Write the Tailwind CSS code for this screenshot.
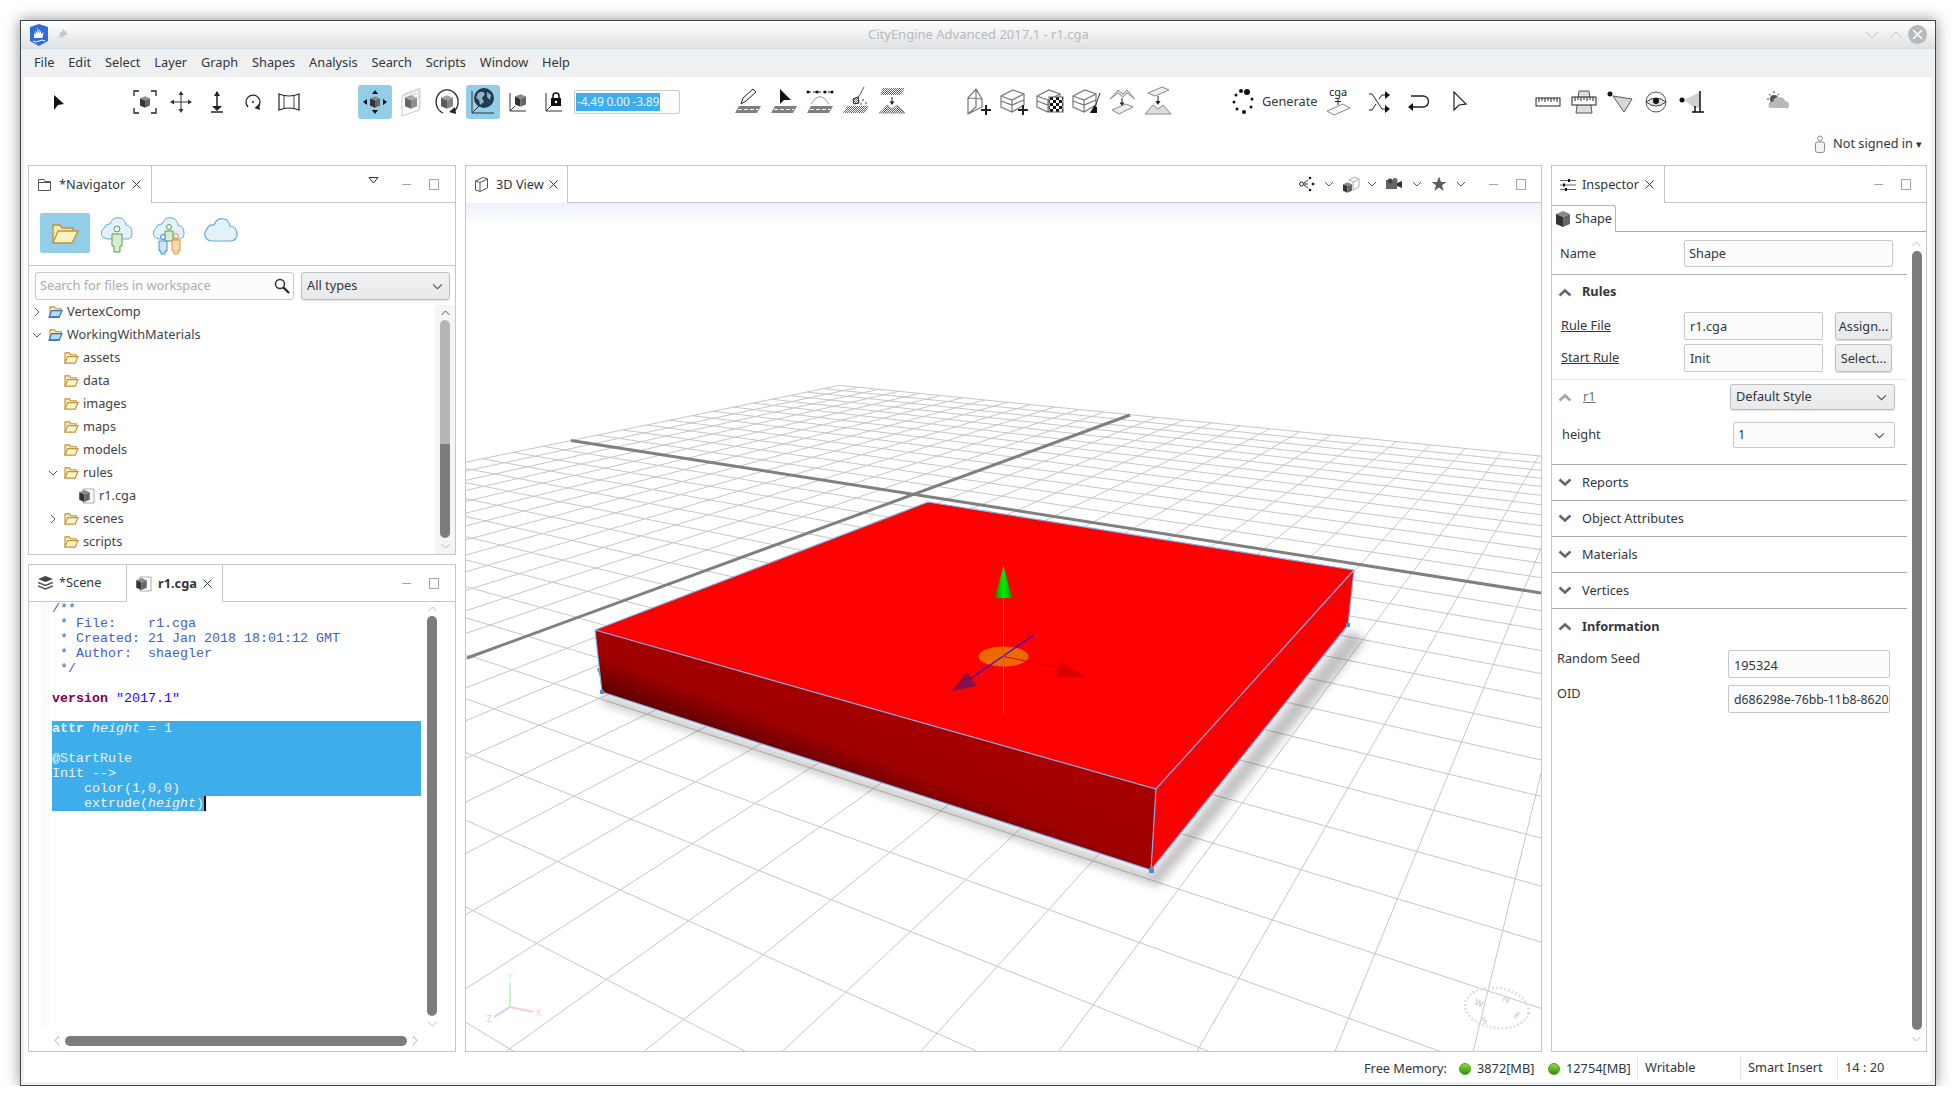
<!DOCTYPE html>
<html lang="en">
<head>
  <meta charset="UTF-8" />
  <title>CityEngine Advanced 2017.1 - r1.cga</title>
  <script src="https://cdn.jsdelivr.net/npm/@tailwindcss/browser@4"></script>
</head>
<body class="bg-white font-['Noto_Sans',sans-serif] text-[12.75px] text-[#31363b] overflow-hidden">

  <!-- shared icon parts -->
  <svg class="absolute w-0 h-0">
    <defs>
      <pattern id="hatch" width="2" height="2" patternUnits="userSpaceOnUse">
        <rect width="2" height="2" fill="#fff" />
        <rect width="1" height="1" fill="#666" />
        <rect x="1" y="1" width="1" height="1" fill="#666" />
      </pattern>
      <pattern id="checker" width="6" height="6" patternUnits="userSpaceOnUse">
        <rect width="6" height="6" fill="#fff" />
        <rect width="3" height="3" fill="#111" />
        <rect x="3" y="3" width="3" height="3" fill="#111" />
      </pattern>
      <linearGradient id="frontFace" gradientUnits="userSpaceOnUse" x1="900" y1="716" x2="872" y2="790">
        <stop offset="0" stop-color="#a60000" />
        <stop offset="0.62" stop-color="#9e0000" />
        <stop offset="1" stop-color="#640000" />
      </linearGradient>
      <linearGradient id="greenCone" x1="0" x2="1" y1="0" y2="0">
        <stop offset="0" stop-color="#009a00" />
        <stop offset="0.5" stop-color="#00ee00" />
        <stop offset="1" stop-color="#00a000" />
      </linearGradient>
      <filter id="soft" x="-10%" y="-10%" width="120%" height="120%"><feGaussianBlur stdDeviation="5" /></filter>
    </defs>
    <symbol id="cube" viewBox="0 0 14 16">
      <path d="M7 0 14 3 7 6 0 3z" fill="#8a8a8a" />
      <path d="M0 3 7 6V16L0 13z" fill="#333" />
      <path d="M14 3 7 6V16L14 13z" fill="#666" />
    </symbol>
    <symbol id="folder" viewBox="0 0 16 14">
      <path d="M1 13V2h5l1 2h6v2" fill="#fbeebb" stroke="#c98f35" stroke-width="1.200" />
      <path d="M1 13 4 6h11l-3 7z" fill="#fff5cf" stroke="#c98f35" stroke-width="1.200" />
    </symbol>
    <symbol id="project" viewBox="0 0 16 14">
      <path d="M2 13V2h5l1 2h6v2" fill="#fbeebb" stroke="#c98f35" stroke-width="1.200" />
      <path d="M1 13 4 6h11l-3 7z" fill="#bcd8f6" stroke="#2a74c9" stroke-width="1.200" />
      <path d="M1 13h11" stroke="#2a74c9" stroke-width="1.5" />
    </symbol>
    <symbol id="road" viewBox="0 0 36 34">
      <path d="M5 28 9 21H31L27 28z" fill="#808080" />
      <path d="M8 24.5H28" stroke="#fff" stroke-dasharray="4 2" />
    </symbol>
    <symbol id="hroad" viewBox="0 0 36 34">
      <path d="M5 28 9 21H31L27 28z" fill="url(#hatch)" />
    </symbol>
    <symbol id="wirebox" viewBox="0 0 36 34">
      <path d="M5 11 17 5 28 9V20L16 27 5 22z M5 11 16 15 28 9 M16 15V27 M5 16 16 20 28 15" fill="#fff" stroke="#777" stroke-width="1.2" />
    </symbol>
    <symbol id="plus" viewBox="0 0 10 10">
      <path d="M5 0V10M0 5H10" stroke="#222" stroke-width="2" />
    </symbol>
    <symbol id="chev" viewBox="0 0 10 6">
      <path d="M1 1 5 5 9 1" fill="none" stroke="#555" />
    </symbol>
    <symbol id="hdup" viewBox="0 0 14 9">
      <path d="M1.5 7.5 7 2.5 12.5 7.5" fill="none" stroke="#666" stroke-width="2.6" />
    </symbol>
    <symbol id="hddown" viewBox="0 0 14 9">
      <path d="M1.5 1.5 7 6.5 12.5 1.5" fill="none" stroke="#666" stroke-width="2.6" />
    </symbol>
  </svg>

  <div class="ml-[20px] mt-[20px] w-[1916px] h-[1066px] border border-[#3f4750] shadow-[0_0_14px_rgba(0,0,0,0.45)] bg-[#eff0f1] flex flex-col">

    <!-- title bar -->
    <div class="h-[28px] shrink-0 relative flex items-center bg-linear-to-b from-white to-[#dfe1e3] border-b border-[#d3e0ea]">
      <svg class="ml-[8px] w-[20px] h-[22px]" viewBox="0 0 20 22">
        <path d="M10 0 19 3V17L10 22 1 17V3z" fill="#2f6bdc" />
        <path d="M5 14V9l1.5 2V6l2 4V3l2 7V5l2 5 2-2-1 6z" fill="#fff" />
        <path d="M4 17q3 2 6 0t6 0" fill="none" stroke="#fff" />
      </svg>
      <svg class="ml-[6px] w-[14px] h-[14px]" viewBox="0 0 14 14">
        <path d="M8 1 13 6 10 7 7 10 6 8 2 12 5 7 4 5 7 4z" fill="#c4c7ca" />
      </svg>
      <div class="absolute left-[847px] text-[#b7babd] text-[13px]">CityEngine Advanced 2017.1 - r1.cga</div>
      <div class="ml-auto flex items-center pr-[8px]">
        <svg class="w-[14px] h-[8px] mr-[10px]" viewBox="0 0 14 8"><path d="M1 1 7 7 13 1" fill="none" stroke="#c2c5c8" /></svg>
        <svg class="w-[14px] h-[8px] mr-[5px]" viewBox="0 0 14 8"><path d="M1 7 7 1 13 7" fill="none" stroke="#c2c5c8" /></svg>
        <svg class="w-[19px] h-[19px]" viewBox="0 0 19 19"><circle cx="9.500" cy="9.500" r="9.500" fill="#b6babd" /><path d="M5 5 14 14M14 5 5 14" stroke="#fff" stroke-width="1.500" /></svg>
      </div>
    </div>

    <!-- menu bar -->
    <div class="h-[28px] shrink-0 flex items-center gap-[13.9px] pl-[13px]">
      <span>File</span><span>Edit</span><span>Select</span><span>Layer</span><span>Graph</span><span>Shapes</span><span>Analysis</span><span>Search</span><span>Scripts</span><span>Window</span><span>Help</span>
    </div>

    <div class="flex-1 mx-[3px] mb-[3px] bg-white flex flex-col min-h-0">

      <!-- main toolbar -->
      <div class="h-[50px] shrink-0 flex items-center">
        <svg class="ml-[17px] w-[36px] h-[34px]" viewBox="0 0 36 34"><path d="M13 10V25L17 20 23 19z" fill="#111" /></svg>

        <div class="ml-[50px] flex">
          <svg class="w-[36px] h-[34px]" viewBox="0 0 36 34"><path d="M7 11V6h5M24 6h5v5M7 23v5h5M24 28h5v-5" fill="none" stroke="#222" stroke-width="1.300" /><use href="#cube" x="13" y="11" width="10" height="12" /></svg>
          <svg class="w-[36px] h-[34px]" viewBox="0 0 36 34"><path d="M18 8V26M9 17H27" stroke="#333" /><path d="M18 6 15.500 10H20.500zM18 28 15.500 24H20.500zM7 17 11 14.500V19.500zM29 17 25 14.500V19.500z" fill="#333" /></svg>
          <svg class="w-[36px] h-[34px]" viewBox="0 0 36 34"><path d="M18 7V24" stroke="#222" stroke-width="1.500" /><path d="M18 6 15 11H21zM18 26 13 21H23z" fill="#222" /><path d="M12 27H24" stroke="#222" stroke-width="1.500" /></svg>
          <svg class="w-[36px] h-[34px]" viewBox="0 0 36 34"><path d="M23 22A7 7 0 1 0 13 22" fill="none" stroke="#222" stroke-width="1.300" /><path d="M25 25 19.500 23 24 19z" fill="#222" /><circle cx="18" cy="17" r="1" fill="#222" /></svg>
          <svg class="w-[36px] h-[34px]" viewBox="0 0 36 34"><path d="M8 9Q18 13 28 9V25Q18 21 8 25z" fill="#fff" stroke="#222" stroke-width="1.200" /><path d="M13 11V23M23 11V23" stroke="#444" /></svg>
        </div>

        <div class="ml-[50px] flex items-center">
          <div class="w-[36px] h-[34px] flex justify-center">
            <svg class="w-[34px] h-[34px] rounded-[3px] bg-[#93cee9]" viewBox="0 0 34 34"><use href="#cube" x="12" y="11" width="10" height="12" /><path d="M17 5 14 9H20zM17 29 14 25H20zM5 17 9 14V20zM29 17 25 14V20z" fill="#111" /></svg>
          </div>
          <svg class="w-[36px] h-[34px]" viewBox="0 0 36 34"><path d="M9 11 26 5V25L9 31z" fill="#fff" stroke="#ccc" /><path d="M11 9 27 3V23" fill="none" stroke="#ccc" /><path d="M11 13 24 8.500" stroke="#bbb" /><use href="#cube" x="12" y="10" width="12" height="14" opacity=".75" /></svg>
          <svg class="w-[36px] h-[34px]" viewBox="0 0 36 34"><path d="M24 27A11 12 0 1 0 14 28" fill="none" stroke="#222" stroke-width="1.300" /><path d="M27 29 20 27 26 22z" fill="#222" /><use href="#cube" x="12" y="10" width="12" height="14" opacity=".8" /></svg>
          <div class="w-[36px] h-[34px] flex justify-center">
            <svg class="w-[34px] h-[34px] rounded-[3px] bg-[#93cee9]" viewBox="0 0 34 34"><path d="M6 6V28H28" fill="none" stroke="#333" /><path d="M6 28 13 21" stroke="#333" /><circle cx="18" cy="13" r="10" fill="#1f3b4d" /><path d="M12 8q5-3 7 1l-3 4 2 4-4 3-1-5-3-2zM21 7l4 3-1 5-3-3z" fill="#8fb4c8" /></svg>
          </div>
          <svg class="w-[36px] h-[34px]" viewBox="0 0 36 34"><path d="M9 8V26H25" fill="none" stroke="#333" /><path d="M9 26 14 21" stroke="#333" /><use href="#cube" x="14" y="9" width="11" height="13" /></svg>
          <svg class="w-[36px] h-[34px]" viewBox="0 0 36 34"><path d="M9 8V26H25" fill="none" stroke="#333" /><path d="M9 26 14 21" stroke="#333" /><rect x="14" y="13" width="10" height="8" fill="#111" /><path d="M16 13V11a3 3 0 0 1 6 0v2" fill="none" stroke="#111" stroke-width="1.500" /><circle cx="19" cy="17" r="1.200" fill="#fff" /></svg>
          <div class="ml-[1px] w-[106px] h-[24px] border border-[#c9cbcd] rounded-[2px] bg-[#fcfcfc] flex items-center pl-[1px] text-[12px] overflow-hidden">
            <span class="bg-[#3daee9] text-[#eff0f1] px-[1px] leading-[18px] tracking-[-0.2px] whitespace-nowrap">-4.49 0.00 -3.89</span>
          </div>
        </div>

        <div class="ml-[50px] flex">
          <svg class="w-[36px] h-[34px]" viewBox="0 0 36 34"><path d="M11 19 13 13 23 4 26 7 16 16z" fill="#fff" stroke="#222" /><use href="#road" width="36" height="34" /></svg>
          <svg class="w-[36px] h-[34px]" viewBox="0 0 36 34"><path d="M14 4V19L18 15H25z" fill="#111" /><use href="#road" width="36" height="34" /></svg>
          <svg class="w-[36px] h-[34px]" viewBox="0 0 36 34"><path d="M6 7H30" stroke="#222" stroke-dasharray="3 2" /><circle cx="6" cy="7" r="1.500" fill="#111" /><circle cx="15" cy="7" r="1.500" fill="#111" /><circle cx="23" cy="7" r="1.500" fill="#111" /><circle cx="30" cy="7" r="1.500" fill="#111" /><path d="M9 19Q18 4 27 19" fill="none" stroke="#999" /><use href="#road" width="36" height="34" /></svg>
          <svg class="w-[36px] h-[34px]" viewBox="0 0 36 34"><path d="M26 2 20 13" stroke="#555" /><path d="M20 12 15 14 16 19 21 18z" fill="url(#hatch)" stroke="#222" /><circle cx="25" cy="15" r=".8" fill="#222" /><circle cx="28" cy="18" r=".8" fill="#222" /><circle cx="23" cy="19" r=".8" fill="#222" /><use href="#hroad" width="36" height="34" /></svg>
          <svg class="w-[36px] h-[34px]" viewBox="0 0 36 34"><path d="M6 10 9 3H31L27 10z" fill="url(#hatch)" /><path d="M18 12V18" stroke="#222" /><path d="M18 20 15.500 16.500H20.500z" fill="#222" /><path d="M5 28 13 20 18 24 23 20 31 28z" fill="url(#hatch)" stroke="#999" /></svg>
        </div>

        <div class="ml-[50px] flex">
          <svg class="w-[36px] h-[34px]" viewBox="0 0 36 34"><path d="M8 13 16 4 22 14V22L8 29zM8 13 22 14M16 4V22L8 29" fill="#fff" stroke="#777" stroke-width="1.200" /><use href="#plus" x="21" y="20" width="10" height="10" /></svg>
          <svg class="w-[36px] h-[34px]" viewBox="0 0 36 34"><use href="#wirebox" width="36" height="34" /><use href="#plus" x="22" y="20" width="10" height="10" /></svg>
          <svg class="w-[36px] h-[34px]" viewBox="0 0 36 34"><use href="#wirebox" width="36" height="34" /><rect x="17" y="12" width="14" height="15" fill="url(#checker)" stroke="#666" /></svg>
          <svg class="w-[36px] h-[34px]" viewBox="0 0 36 34"><use href="#wirebox" width="36" height="34" /><path d="M32 8 27 22" stroke="#333" /><path d="M26 21 22 28H29L29 22z" fill="#111" /></svg>
          <svg class="w-[36px] h-[34px]" viewBox="0 0 36 34"><path d="M6 14 14 5 19 9 23 5 31 14 23 8 19 12 14 8z" fill="#ddd" stroke="#888" /><path d="M18 13V19" stroke="#222" /><path d="M18 21 15.500 17.500H20.500z" fill="#222" /><path d="M8 25 22 19 29 22 15 29z" fill="#eee" stroke="#888" /></svg>
          <svg class="w-[36px] h-[34px]" viewBox="0 0 36 34"><path d="M8 8 22 2 29 5 15 11z" fill="#eee" stroke="#888" /><path d="M18 11V17" stroke="#222" /><path d="M18 20 15.500 16H20.500z" fill="#222" /><path d="M5 29 13 20 18 24 23 20 31 29z" fill="#ddd" stroke="#888" /></svg>
        </div>

        <svg class="ml-[49px] w-[36px] h-[34px]" viewBox="0 0 36 34"><circle cx="22" cy="7" r="3" fill="#111" /><circle cx="16" cy="6" r="2" fill="#111" /><circle cx="27" cy="14" r="1.500" fill="#111" /><circle cx="26" cy="22" r="1.500" fill="#111" /><circle cx="19" cy="27" r="2" fill="#111" /><circle cx="12" cy="24" r="1.500" fill="#111" /><circle cx="9" cy="17" r="1.500" fill="#111" /><circle cx="11" cy="10" r="1.500" fill="#111" /></svg>
        <span class="w-[59px] whitespace-nowrap pl-[1px]">Generate</span>
        <svg class="w-[36px] h-[34px]" viewBox="0 0 36 34"><text x="18" y="11" text-anchor="middle" font-family="Noto Sans" font-size="11" fill="#222">cga</text><path d="M18 13V20M15 16.500H21" stroke="#222" /><path d="M7 26 23 19 30 23 14 30z" fill="#fff" stroke="#888" /></svg>
        <svg class="ml-[4px] w-[36px] h-[34px]" viewBox="0 0 36 34"><path d="M9 9H12L22 24H26M9 25H12L16 19M19 14 22 10H26" fill="none" stroke="#222" /><path d="M30 10 25 6V14zM30 24 25 20V28z" fill="#111" /></svg>
        <svg class="ml-[4px] w-[36px] h-[34px]" viewBox="0 0 36 34"><path d="M11 11H23A5 5 0 0 1 23 22H12" fill="none" stroke="#222" stroke-width="1.400" /><path d="M8 22 13 18V26z" fill="#111" /></svg>
        <svg class="ml-[6px] w-[36px] h-[34px]" viewBox="0 0 36 34"><path d="M12 7V25L17 20 24 19z" fill="#fff" stroke="#222" stroke-width="1.200" /></svg>

        <div class="ml-[52px] flex">
          <svg class="w-[36px] h-[34px]" viewBox="0 0 36 34"><rect x="6" y="13" width="24" height="8" fill="#fff" stroke="#222" /><path d="M9 13V17M12 13V16M15 13V17M18 13V16M21 13V17M24 13V16M27 13V17" stroke="#222" /></svg>
          <svg class="w-[36px] h-[34px]" viewBox="0 0 36 34"><path d="M13 6H23L26 28H10z" fill="#ddd" stroke="#555" /><rect x="6" y="12" width="24" height="8" fill="#fff" stroke="#222" /><path d="M9 12V16M12 12V15M15 12V16M18 12V15M21 12V16M24 12V15M27 12V16" stroke="#222" /></svg>
          <svg class="w-[36px] h-[34px]" viewBox="0 0 36 34"><path d="M11 11 30 14 22 27z" fill="#d7d7d7" stroke="#555" /><circle cx="8" cy="9" r="2.500" fill="#111" /></svg>
          <svg class="w-[36px] h-[34px]" viewBox="0 0 36 34"><circle cx="18" cy="17" r="10" fill="#fff" stroke="#555" /><path d="M8 17Q18 9 28 17Q18 25 8 17z" fill="#e0e0e0" stroke="#444" /><circle cx="18" cy="16" r="3" fill="#111" /></svg>
          <svg class="w-[36px] h-[34px]" viewBox="0 0 36 34"><path d="M10 15 26 7V23H21z" fill="#d0d0d0" /><path d="M26 6V27M21 21V27M18 27H30" stroke="#111" stroke-width="1.500" /><circle cx="8" cy="15" r="2.500" fill="#111" /></svg>
        </div>

        <svg class="ml-[50px] w-[36px] h-[34px]" viewBox="0 0 36 34"><circle cx="14" cy="14" r="4" fill="#555" /><path d="M14 6V8M7 14H9M9 9 10.500 10.500M19 9 17.500 10.500M9 19 10.500 17.500" stroke="#333" /><path d="M11 23Q8 23 8.500 20T13 17Q14 12 19 12T25 16Q30 17 29 21T26 23z" fill="#b9b9b9" /></svg>
      </div>

      <!-- sign in row -->
      <div class="h-[38px] shrink-0 flex items-center justify-end pr-[10px] pb-[4px]">
        <svg class="w-[10px] h-[18px] mr-[8px]" viewBox="0 0 10 18"><circle cx="5" cy="3.500" r="2.500" fill="#fff" stroke="#8a8d90" /><rect x=".5" y="7" width="9" height="10.500" rx="2" fill="#f3f3f3" stroke="#8a8d90" /></svg>
        <span>Not signed in</span><span class="ml-[3px] text-[11px]">▾</span>
      </div>

      <!-- panels -->
      <div class="h-[887px] shrink-0 flex pl-[4px] gap-[9px]">

        <!-- left column -->
        <div class="w-[428px] flex flex-col gap-[9px]">

          <!-- navigator -->
          <div class="h-[390px] shrink-0 border border-[#c4c6c8] flex flex-col">
            <div class="h-[37px] shrink-0 flex">
              <div class="w-[123px] border-r border-[#c4c6c8] flex items-center pl-[9px]">
                <svg class="w-[13px] h-[12px] mr-[8px]" viewBox="0 0 13 12"><path d="M.5 11.500V.5H6L7 2.500H12.500V11.500zM.5 3.500H12.500" fill="none" stroke="#555" /></svg>
                <span>*Navigator</span>
                <svg class="ml-[7px] w-[9px] h-[9px]" viewBox="0 0 9 9"><path d="M.5.5 8.500 8.500M8.500.5 .5 8.500" stroke="#31363b" /></svg>
              </div>
              <div class="flex-1 border-b border-[#c4c6c8] flex items-center justify-end pr-[16px]">
                <svg class="w-[11px] h-[8px] mb-[8px] mr-[23px]" viewBox="0 0 11 8"><path d="M1 1.500H10L5.500 7z" fill="#fff" stroke="#333" /></svg>
                <div class="w-[9px] h-px bg-[#a4a8ac] mr-[18px]"></div>
                <div class="w-[10px] h-[11px] border border-[#a4a8ac]"></div>
              </div>
            </div>
            <!-- workspace icons -->
            <div class="h-[63px] shrink-0 border-b border-[#c4c6c8] flex items-start pl-[11px] pt-[10px]">
              <div class="w-[50px] h-[40px] rounded-[2px] bg-[#93cee9] flex items-center justify-center">
                <svg class="w-[27px] h-[21px]" viewBox="0 0 27 21"><path d="M1 19V2H8L10 5H21V9" fill="#f7e9a6" stroke="#c0923a" stroke-width="1.300" /><path d="M1 20 6 8H26L20 20z" fill="#fdf3c0" stroke="#c0923a" stroke-width="1.300" /></svg>
              </div>
              <svg class="ml-[9px] mt-[2px] w-[36px] h-[40px]" viewBox="0 0 36 40"><path d="M8 24A6 6 0 0 1 5 13Q7 8 11 9 14 1 21 3 26 4 27 10 33 11 33 18T27 24z" fill="#e3f1fb" stroke="#63add9" /><circle cx="18" cy="14" r="3" fill="#f3f8ee" stroke="#5e9a54" /><path d="M13 19H23V31H21V37H15V31H13z" fill="#d8ecd0" stroke="#5e9a54" /></svg>
              <svg class="ml-[16px] mt-[2px] w-[36px] h-[40px]" viewBox="0 0 36 40"><path d="M8 24A6 6 0 0 1 5 13Q7 8 11 9 14 1 21 3 26 4 27 10 33 11 33 18T27 24z" fill="#e3f1fb" stroke="#63add9" /><circle cx="18" cy="12" r="2.500" fill="#f3f8ee" stroke="#5e9a54" /><path d="M14 16H22V26H14z" fill="#d8ecd0" stroke="#5e9a54" /><circle cx="12" cy="22" r="2.500" fill="#e8f3fc" stroke="#3c8fd0" /><path d="M8 26H16V36H14V39H10V36H8z" fill="#cfe6f8" stroke="#3c8fd0" /><circle cx="25" cy="21" r="2.500" fill="#fdeedd" stroke="#ea8f3c" /><path d="M21 25H29V36H27V39H23V36H21z" fill="#fbd9b5" stroke="#ea8f3c" /></svg>
              <svg class="ml-[16px] mt-[3px] w-[36px] h-[28px]" viewBox="0 0 36 28"><path d="M8 25A7 7 0 0 1 4 13Q6 8 11 9 14 1 21 3 26 4 27 10 34 11 34 18T27 25z" fill="#e3f1fb" stroke="#63add9" stroke-width="1.200" /></svg>
            </div>
            <!-- search -->
            <div class="h-[6px] shrink-0"></div>
            <div class="h-[28px] shrink-0 flex pl-[6px] gap-[7px]">
              <div class="w-[259px] border border-[#c6c8ca] rounded-[3px] bg-[#fcfcfc] flex items-center pl-[4px] pr-[3px] text-[#a9acaf]">
                <span>Search for files in workspace</span>
                <svg class="ml-auto w-[16px] h-[16px]" viewBox="0 0 16 16"><circle cx="6" cy="6" r="4.500" fill="#fff" stroke="#333" stroke-width="1.500" /><path d="M9.500 9.500 15 15" stroke="#222" stroke-width="2.200" /></svg>
              </div>
              <div class="w-[149px] border border-[#bcbec0] rounded-[3px] bg-linear-to-b from-[#f0f1f2] to-[#e8e9ea] flex items-center pl-[5px] pr-[6px] shadow-[0_1px_1px_rgba(0,0,0,0.12)]">
                <span>All types</span>
                <svg class="ml-auto w-[11px] h-[7px]"><use href="#chev" width="11" height="7" /></svg>
              </div>
            </div>
            <!-- tree -->
            <div class="flex-1 flex min-h-0">
              <div class="flex-1 leading-[23px] text-[#3d4348]">
                <div class="h-[23px] flex items-center"><svg class="ml-[5px] w-[6px] h-[10px] mr-[8px]" viewBox="0 0 6 10"><path d="M1 1 5 5 1 9" fill="none" stroke="#555" /></svg><svg class="w-[15px] h-[13px] mr-[4px]"><use href="#project" width="15" height="13" /></svg>VertexComp</div>
                <div class="h-[23px] flex items-center"><svg class="ml-[3px] w-[10px] h-[6px] mr-[6px]"><use href="#chev" width="10" height="6" /></svg><svg class="w-[15px] h-[13px] mr-[4px]"><use href="#project" width="15" height="13" /></svg>WorkingWithMaterials</div>
                <div class="h-[23px] flex items-center pl-[35px]"><svg class="w-[15px] h-[13px] mr-[4px]"><use href="#folder" width="15" height="13" /></svg>assets</div>
                <div class="h-[23px] flex items-center pl-[35px]"><svg class="w-[15px] h-[13px] mr-[4px]"><use href="#folder" width="15" height="13" /></svg>data</div>
                <div class="h-[23px] flex items-center pl-[35px]"><svg class="w-[15px] h-[13px] mr-[4px]"><use href="#folder" width="15" height="13" /></svg>images</div>
                <div class="h-[23px] flex items-center pl-[35px]"><svg class="w-[15px] h-[13px] mr-[4px]"><use href="#folder" width="15" height="13" /></svg>maps</div>
                <div class="h-[23px] flex items-center pl-[35px]"><svg class="w-[15px] h-[13px] mr-[4px]"><use href="#folder" width="15" height="13" /></svg>models</div>
                <div class="h-[23px] flex items-center"><svg class="ml-[19px] w-[10px] h-[6px] mr-[6px]"><use href="#chev" width="10" height="6" /></svg><svg class="w-[15px] h-[13px] mr-[4px]"><use href="#folder" width="15" height="13" /></svg>rules</div>
                <div class="h-[23px] flex items-center pl-[50px]"><svg class="w-[16px] h-[16px] mr-[4px]" viewBox="0 0 16 16"><path d="M4 1H15V15H4z" fill="#fff" stroke="#aaa" /><use href="#cube" x="0" y="2" width="11" height="12" /></svg>r1.cga</div>
                <div class="h-[23px] flex items-center"><svg class="ml-[21px] w-[6px] h-[10px] mr-[8px]" viewBox="0 0 6 10"><path d="M1 1 5 5 1 9" fill="none" stroke="#555" /></svg><svg class="w-[15px] h-[13px] mr-[4px]"><use href="#folder" width="15" height="13" /></svg>scenes</div>
                <div class="h-[23px] flex items-center pl-[35px]"><svg class="w-[15px] h-[13px] mr-[4px]"><use href="#folder" width="15" height="13" /></svg>scripts</div>
              </div>
              <div class="w-[20px] mt-[5px] bg-[#f5f5f5] flex flex-col items-center">
                <svg class="mt-[5px] mb-[4px] w-[11px] h-[6px] rotate-180"><use href="#chev" width="11" height="6" /></svg>
                <div class="w-[10px] h-[124px] rounded-t-full bg-[#b4b6b8]"></div>
                <div class="w-[10px] h-[94px] rounded-b-full bg-[#7a7d7f]"></div>
                <svg class="mt-[5px] w-[11px] h-[6px] opacity-40"><use href="#chev" width="11" height="6" /></svg>
              </div>
            </div>
          </div>

          <!-- scene / editor -->
          <div class="flex-1 min-h-0 border border-[#c4c6c8] flex flex-col">
            <div class="h-[37px] shrink-0 flex">
              <div class="w-[98px] border-r border-b border-[#c4c6c8] flex items-center pl-[9px]">
                <svg class="w-[15px] h-[14px] mr-[6px]" viewBox="0 0 15 14"><path d="M7.500 0 15 3 7.500 6 0 3z" fill="#444" /><path d="M0 6.500 7.500 9.500 15 6.500M0 10 7.500 13 15 10" fill="none" stroke="#555" stroke-width="1.500" /></svg>
                <span>*Scene</span>
              </div>
              <div class="w-[96px] border-r border-[#c4c6c8] flex items-center pl-[9px]">
                <svg class="w-[16px] h-[16px] mr-[6px]" viewBox="0 0 16 16"><path d="M4 1H15V15H4z" fill="#fff" stroke="#aaa" /><use href="#cube" x="0" y="2" width="11" height="12" /></svg>
                <span class="font-bold">r1.cga</span>
                <svg class="ml-[6px] w-[9px] h-[9px]" viewBox="0 0 9 9"><path d="M.5.5 8.500 8.500M8.500.5 .5 8.500" stroke="#31363b" /></svg>
              </div>
              <div class="flex-1 border-b border-[#c4c6c8] flex items-center justify-end pr-[16px]">
                <div class="w-[9px] h-px bg-[#a4a8ac] mr-[18px]"></div>
                <div class="w-[10px] h-[11px] border border-[#a4a8ac]"></div>
              </div>
            </div>
            <div class="flex-1 min-h-0 flex">
              <div class="w-[12px] shrink-0"></div>
              <div class="w-[8px] shrink-0 bg-[#fafafa]"></div>
              <div class="flex-1 overflow-hidden pl-[3px]">
                <div class="-mt-[1px] font-['Liberation_Mono',monospace] text-[13.33px] leading-[15px] text-[#4560c0]">
                  <div class="h-[15px] whitespace-pre">/**</div>
                  <div class="h-[15px] whitespace-pre"> * File:    r1.cga</div>
                  <div class="h-[15px] whitespace-pre"> * Created: 21 Jan 2018 18:01:12 GMT</div>
                  <div class="h-[15px] whitespace-pre"> * Author:  shaegler</div>
                  <div class="h-[15px] whitespace-pre"> */</div>
                  <div class="h-[15px]"></div>
                  <div class="h-[15px] whitespace-pre"><span class="font-bold text-[#7f0055]">version</span> <span class="text-[#2a00ff]">"2017.1"</span></div>
                  <div class="h-[15px]"></div>
                  <div class="w-[370px] bg-[#3daee9] text-[#eff0f1]">
                    <div class="h-[15px] whitespace-pre"><span class="font-bold">attr</span> <span class="italic">height</span> = 1</div>
                    <div class="h-[15px]"></div>
                    <div class="h-[15px] whitespace-pre">@StartRule</div>
                    <div class="h-[15px] whitespace-pre">Init --&gt;</div>
                    <div class="h-[15px] whitespace-pre">    color(1,0,0)</div>
                  </div>
                  <div class="h-[15px] flex text-[#eff0f1]">
                    <span class="bg-[#3daee9] whitespace-pre">    extrude(<span class="italic">height</span>)</span><span class="w-[2px] bg-black"></span>
                  </div>
                </div>
              </div>
              <div class="w-[22px] shrink-0 mr-[12px] flex flex-col items-center">
                <svg class="mt-[4px] w-[11px] h-[6px] rotate-180 opacity-40"><use href="#chev" width="11" height="6" /></svg>
                <div class="mt-[4px] w-[10px] h-[400px] rounded-full bg-[#7a7d7f]"></div>
                <svg class="mt-[5px] w-[11px] h-[6px] opacity-40"><use href="#chev" width="11" height="6" /></svg>
              </div>
            </div>
            <div class="h-[24px] shrink-0 flex items-center pl-[25px] pt-[3px]">
              <svg class="w-[6px] h-[11px] opacity-50" viewBox="0 0 6 11"><path d="M5 1 1 5.500 5 10" fill="none" stroke="#555" /></svg>
              <div class="ml-[5px] w-[342px] h-[10px] rounded-full bg-[#7a7d7f]"></div>
              <svg class="ml-[5px] w-[6px] h-[11px] opacity-50" viewBox="0 0 6 11"><path d="M1 1 5 5.500 1 10" fill="none" stroke="#555" /></svg>
            </div>
          </div>
        </div>

        <!-- 3D view -->
        <div class="w-[1077px] border border-[#c4c6c8] flex flex-col">
          <div class="h-[37px] shrink-0 flex">
            <div class="w-[102px] border-r border-[#c4c6c8] flex items-center pl-[9px]">
              <svg class="w-[13px] h-[15px] mr-[8px]" viewBox="0 0 13 15"><path d="M.5 4 8 .5 12.500 2V11L5 14.500.5 13zM.5 4 5 5.500 12.500 2M5 5.500V14.500" fill="#fff" stroke="#555" /></svg>
              <span>3D View</span>
              <svg class="ml-[5px] w-[9px] h-[9px]" viewBox="0 0 9 9"><path d="M.5.5 8.500 8.500M8.500.5 .5 8.500" stroke="#31363b" /></svg>
            </div>
            <div class="flex-1 border-b border-[#c4c6c8] flex items-center justify-end pr-[15px]">
              <svg class="w-[16px] h-[16px]" viewBox="0 0 16 16"><circle cx="2.500" cy="8" r="2" fill="#fff" stroke="#222" /><path d="M5 8H9M5 7 9 4M5 9 9 12" stroke="#333" /><circle cx="11" cy="2" r="1.300" fill="#111" /><circle cx="14" cy="8" r="1.300" fill="#111" /><circle cx="11" cy="14" r="1.300" fill="#111" /></svg>
              <svg class="ml-[9px] w-[10px] h-[6px]"><use href="#chev" width="10" height="6" /></svg>
              <svg class="ml-[9px] w-[17px] h-[17px]" viewBox="0 0 17 17"><path d="M6 4 12 1 16 3V11L10 14" fill="#fff" stroke="#aaa" /><path d="M6 4 10 6 16 3M10 6V14" fill="none" stroke="#aaa" /><use href="#cube" x="0" y="6" width="9" height="11" /></svg>
              <svg class="ml-[7px] w-[10px] h-[6px]"><use href="#chev" width="10" height="6" /></svg>
              <svg class="ml-[9px] w-[16px] h-[12px]" viewBox="0 0 16 12"><rect y="2" width="11" height="9" fill="#666" /><circle cx="4" cy="3" r="2.500" fill="#444" /><circle cx="9" cy="2.500" r="2.500" fill="#666" /><path d="M11 5 16 3V10L11 8z" fill="#333" /></svg>
              <svg class="ml-[10px] w-[10px] h-[6px]"><use href="#chev" width="10" height="6" /></svg>
              <svg class="ml-[9px] w-[16px] h-[16px]" viewBox="0 0 16 16"><path d="M8 .5 10 6H15.500L11 9.300 12.700 15 8 11.500 3.300 15 5 9.300 .5 6H6z" fill="#5a5d60" /></svg>
              <svg class="ml-[9px] w-[10px] h-[6px]"><use href="#chev" width="10" height="6" /></svg>
              <div class="ml-[23px] w-[9px] h-px bg-[#a4a8ac] mr-[18px]"></div>
              <div class="w-[10px] h-[11px] border border-[#a4a8ac]"></div>
            </div>
          </div>
          <div class="flex-1 min-h-0 bg-[linear-gradient(#edf1fb,#fff_24px)]">
            <svg id="scene" class="block w-[1075px] h-[848px]" viewBox="466 203 1075 848">
              <g id="grid" stroke="#c6c6c6" stroke-width="1" fill="none"></g>
              <path d="M571 440.500 1541 593M1130 415 467 658" stroke="#808080" stroke-width="3" fill="none" />
              <!-- shadow -->
              <path d="M602 694 1151 874 1350 630 1366 640 1158 886 600 702z" fill="#000" opacity=".24" filter="url(#soft)" />
              <path d="M597 668 601 668 603 686z" fill="#888" />
              <!-- box -->
              <path d="M595 630 1156 789 1151 870 602 692z" fill="url(#frontFace)" />
              <path d="M1156 789 1354 570 1348 625 1151 870z" fill="#fb0000" />
              <path d="M928 502 1354 570 1156 789 595 630z" fill="#ff0000" />
              <path d="M928 502 1354 570M928 502 595 630M595 630 1156 789 1354 570M1156 789 1151 870M595 630 602 692M1354 570 1348 625M602 692 1151 870 1348 625" fill="none" stroke="#7fb0ee" stroke-width="1.200" />
              <rect x="600" y="690" width="4" height="4" fill="#4a90d9" />
              <rect x="1149" y="868" width="5" height="5" fill="#4a90d9" />
              <rect x="1346" y="623" width="4" height="4" fill="#4a90d9" />
              <!-- move gizmo -->
              <ellipse cx="1003.500" cy="656.500" rx="25" ry="10" fill="#ee6a00" />
              <path d="M1003.500 656.500 1060 668" stroke="#d80000" />
              <path d="M1059.500 662 1087 676.500 1057 677.500z" fill="#d80000" />
              <path d="M1033 635.500 970 679" stroke="#2200ff" stroke-width="1.200" />
              <path d="M952 691 967 672 976 686z" fill="#80104e" />
              <path d="M1003.500 566V713" stroke="#00d000" />
              <path d="M1003.500 566 1012 598 995 598z" fill="url(#greenCone)" />
              <!-- axes indicator -->
              <path d="M510 1007V983" stroke="#c9f2c9" stroke-width="2" />
              <path d="M510 1007 533 1012" stroke="#f9cccc" stroke-width="2" />
              <path d="M510 1007 494 1017" stroke="#cdcdfa" stroke-width="2" />
              <text x="510" y="980" text-anchor="middle" font-family="Noto Sans" font-size="9" fill="#c9f2c9">Y</text>
              <text x="539" y="1016" text-anchor="middle" font-family="Noto Sans" font-size="9" fill="#f9cccc">X</text>
              <text x="489" y="1022" text-anchor="middle" font-family="Noto Sans" font-size="9" fill="#cdcdfa">Z</text>
              <!-- compass -->
              <ellipse cx="1497" cy="1008" rx="32" ry="20" fill="none" stroke="#e2e2e2" stroke-width="3" stroke-dasharray="2 2" transform="rotate(8 1497 1008)" />
              <g font-family="Noto Sans" font-weight="bold" font-size="9" fill="#d5d5d5" text-anchor="middle">
                <text x="1505" y="1002" transform="rotate(25 1505 1002)">N</text>
                <text x="1515" y="1018" transform="rotate(40 1515 1018)">E</text>
                <text x="1486" y="1023" transform="rotate(-30 1486 1023)">S</text>
                <text x="1478" y="1006" transform="rotate(20 1478 1006)">W</text>
              </g>
            </svg>
          </div>
        </div>

        <!-- inspector -->
        <div class="w-[376px] border border-[#c4c6c8] flex flex-col">
          <div class="h-[37px] shrink-0 flex">
            <div class="w-[113px] border-r border-[#c4c6c8] flex items-center pl-[8px]">
              <svg class="w-[16px] h-[12px] mr-[6px]" viewBox="0 0 16 12"><path d="M0 1.500H16M0 6H16M0 10.500H16" stroke="#666" /><path d="M9 0V3M4 4.500V7.500M6 9V12" stroke="#111" stroke-width="2" /></svg>
              <span>Inspector</span>
              <svg class="ml-[6px] w-[9px] h-[9px]" viewBox="0 0 9 9"><path d="M.5.5 8.500 8.500M8.500.5 .5 8.500" stroke="#31363b" /></svg>
            </div>
            <div class="flex-1 border-b border-[#c4c6c8] flex items-center justify-end pr-[15px]">
              <div class="w-[9px] h-px bg-[#a4a8ac] mr-[18px]"></div>
              <div class="w-[10px] h-[11px] border border-[#a4a8ac]"></div>
            </div>
          </div>
          <div class="h-[29px] shrink-0 flex pt-[2px] relative">
            <div class="w-[64px] border-t border-r border-[#b4b6b8] rounded-tr-[3px] flex items-center pl-[4px] bg-white">
              <svg class="w-[14px] h-[16px] mr-[5px]"><use href="#cube" width="14" height="16" /></svg>
              <span>Shape</span>
            </div>
            <div class="flex-1 border-b border-[#a9abad]"></div>
          </div>
          <div class="flex-1 min-h-0 flex">
            <div class="w-[355px] shrink-0">
              <div class="h-[43px] border-b border-[#a9abad] flex pl-[8px] pt-[8px]">
                <span class="w-[124px] leading-[27px]">Name</span>
                <div class="w-[209px] h-[27px] border border-[#c6c8ca] rounded-[2px] bg-[#fcfcfc] pl-[4px] leading-[25px]">Shape</div>
              </div>
              <div class="h-[34px] flex items-center pl-[6px] font-bold">
                <svg class="w-[14px] h-[9px] mr-[10px]"><use href="#hdup" width="14" height="9" /></svg>Rules
              </div>
              <div class="pt-[3px] pb-[7px] border-b border-[#e4e5e6] flex flex-col gap-[4px]">
                <div class="h-[28px] flex items-center pl-[9px]">
                  <span class="w-[123px] underline">Rule File</span>
                  <div class="w-[139px] h-[28px] border border-[#c6c8ca] rounded-[2px] bg-[#fcfcfc] pl-[5px] leading-[26px]">r1.cga</div>
                  <div class="ml-[12px] w-[57px] h-[28px] border border-[#bcbec0] rounded-[3px] bg-linear-to-b from-[#f0f1f2] to-[#e8e9ea] text-center leading-[26px] shadow-[0_1px_1px_rgba(0,0,0,0.15)]">Assign...</div>
                </div>
                <div class="h-[28px] flex items-center pl-[9px]">
                  <span class="w-[123px] underline">Start Rule</span>
                  <div class="w-[139px] h-[28px] border border-[#c6c8ca] rounded-[2px] bg-[#fcfcfc] pl-[5px] leading-[26px]">Init</div>
                  <div class="ml-[12px] w-[57px] h-[28px] border border-[#bcbec0] rounded-[3px] bg-linear-to-b from-[#f0f1f2] to-[#e8e9ea] text-center leading-[26px] shadow-[0_1px_1px_rgba(0,0,0,0.15)]">Select...</div>
                </div>
              </div>
              <div class="h-[85px] border-b border-[#a9abad] flex flex-col">
                <div class="mt-[4px] h-[26px] flex items-center pl-[6px]">
                  <svg class="w-[14px] h-[9px] mr-[11px] opacity-60"><use href="#hdup" width="14" height="9" /></svg>
                  <span class="underline text-[#6b6f73] w-[147px]">r1</span>
                  <div class="w-[165px] h-[26px] border border-[#bcbec0] rounded-[3px] bg-linear-to-b from-[#f0f1f2] to-[#e8e9ea] flex items-center pl-[5px] pr-[7px] shadow-[0_1px_1px_rgba(0,0,0,0.12)]">
                    <span>Default Style</span>
                    <svg class="ml-auto w-[11px] h-[7px]"><use href="#chev" width="11" height="7" /></svg>
                  </div>
                </div>
                <div class="mt-[12px] h-[26px] flex items-center pl-[10px]">
                  <span class="w-[171px]">height</span>
                  <div class="w-[162px] h-[26px] border border-[#c6c8ca] rounded-[2px] bg-[#fcfcfc] flex items-center pl-[4px] pr-[9px]">
                    <span>1</span>
                    <svg class="ml-auto w-[11px] h-[7px]"><use href="#chev" width="11" height="7" /></svg>
                  </div>
                </div>
              </div>
              <div class="h-[36px] border-b border-[#a9abad] flex items-center pl-[6px]"><svg class="w-[14px] h-[9px] mr-[10px]"><use href="#hddown" width="14" height="9" /></svg>Reports</div>
              <div class="h-[36px] border-b border-[#a9abad] flex items-center pl-[6px]"><svg class="w-[14px] h-[9px] mr-[10px]"><use href="#hddown" width="14" height="9" /></svg>Object Attributes</div>
              <div class="h-[36px] border-b border-[#a9abad] flex items-center pl-[6px]"><svg class="w-[14px] h-[9px] mr-[10px]"><use href="#hddown" width="14" height="9" /></svg>Materials</div>
              <div class="h-[36px] border-b border-[#a9abad] flex items-center pl-[6px]"><svg class="w-[14px] h-[9px] mr-[10px]"><use href="#hddown" width="14" height="9" /></svg>Vertices</div>
              <div class="h-[35px] flex items-center pl-[6px] font-bold"><svg class="w-[14px] h-[9px] mr-[10px]"><use href="#hdup" width="14" height="9" /></svg>Information</div>
              <div class="pt-[6px] pl-[5px] flex">
                <span class="w-[171px] leading-[16px]">Random Seed</span>
                <div class="w-[162px] h-[28px] border border-[#c6c8ca] rounded-[2px] bg-[#fcfcfc] pl-[5px] leading-[28px]">195324</div>
              </div>
              <div class="pt-[7px] pl-[5px] flex">
                <span class="w-[171px] leading-[16px]">OID</span>
                <div class="w-[162px] h-[28px] border border-[#c6c8ca] rounded-[2px] bg-[#fcfcfc] pl-[5px] leading-[28px] overflow-hidden whitespace-nowrap text-[12.3px]">d686298e-76bb-11b8-8620</div>
              </div>
            </div>
            <div class="w-[19px] shrink-0 flex flex-col items-center -mt-[2px]">
              <svg class="mt-[11px] mb-[4px] w-[11px] h-[6px] rotate-180 opacity-40"><use href="#chev" width="11" height="6" /></svg>
              <div class="w-[10px] h-[779px] rounded-full bg-[#7a7d7f]"></div>
              <svg class="mt-[6px] w-[11px] h-[6px] opacity-40"><use href="#chev" width="11" height="6" /></svg>
            </div>
          </div>
        </div>
      </div>

      <!-- status bar -->
      <div class="h-[30px] shrink-0 flex items-center pl-[1340px] whitespace-nowrap">
        <span class="w-[95px] pt-[4px]">Free Memory:</span>
        <span class="w-[12px] h-[12px] rounded-full bg-linear-to-b from-[#8fd93a] to-[#2f8f10] border border-[#4a9a20] mt-[4px]"></span>
        <span class="w-[77px] pl-[6px] pt-[4px]">3872[MB]</span>
        <span class="w-[12px] h-[12px] rounded-full bg-linear-to-b from-[#8fd93a] to-[#2f8f10] border border-[#4a9a20] mt-[4px]"></span>
        <span class="w-[77px] pl-[6px] pt-[4px]">12754[MB]</span>
        <span class="w-[103px] h-[25px] border-l border-[#e2e3e4] pl-[7px] leading-[25px]">Writable</span>
        <span class="w-[97px] h-[25px] border-l border-[#e2e3e4] pl-[7px] leading-[25px]">Smart Insert</span>
        <span class="w-[55px] h-[25px] border-l border-[#e2e3e4] pl-[7px] leading-[25px]">14 : 20</span>
      </div>
    </div>
  </div>

  <script>
    // ground grid, projected from the two vanishing points of the box edges
    const O = [913, 494.5], VA = [-879, 212], VB = [1678, 213];
    const ds = 0.01815, dt = 0.03046, sMax = 13 * ds, tMax = 13 * dt;
    const grid = document.getElementById("grid");

    function project(s, t) {
      const w = 1 + s + t;
      return [(O[0] + s * VA[0] + t * VB[0]) / w, (O[1] + s * VA[1] + t * VB[1]) / w];
    }

    function addLine(a, b) {
      const line = document.createElementNS("http://www.w3.org/2000/svg", "line");
      line.setAttribute("x1", a[0]);
      line.setAttribute("y1", a[1]);
      line.setAttribute("x2", b[0]);
      line.setAttribute("y2", b[1]);
      grid.appendChild(line);
    }

    for (let i = 13; i > -70; i--) {
      const s = i * ds, tEnd = 0.2 - 1 - s;
      if (tEnd < tMax) addLine(project(s, tMax), project(s, tEnd));
    }
    for (let j = 13; j > -50; j--) {
      const t = j * dt, sEnd = 0.2 - 1 - t;
      if (sEnd < sMax) addLine(project(sMax, t), project(sEnd, t));
    }
  </script>
</body>
</html>
